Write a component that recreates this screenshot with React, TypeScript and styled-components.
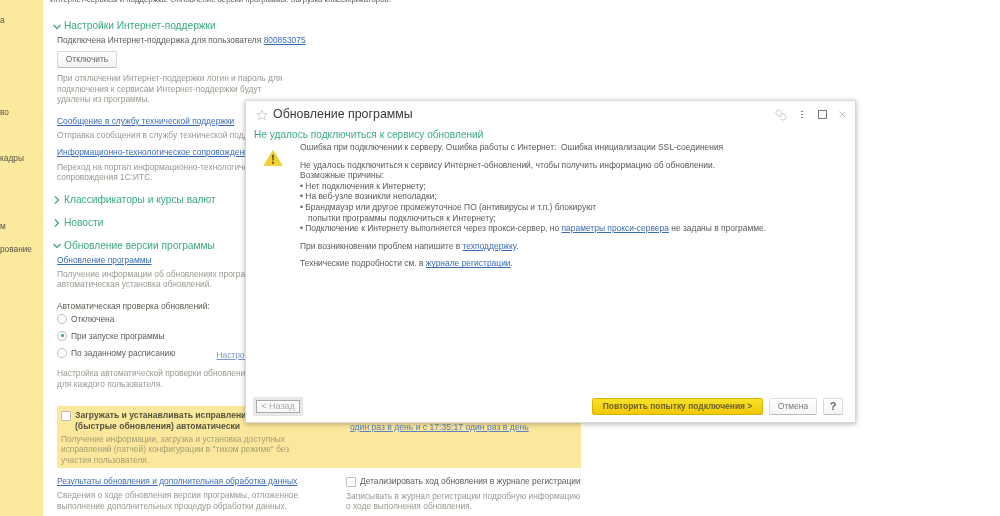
import React from "react";
import styled, { createGlobalStyle } from "styled-components";
import { Link as LinkIcon, X } from "lucide-react";

const Global = createGlobalStyle`
  html, body { margin: 0; padding: 0; background: #fff; overflow: hidden; }
  body { font-family: "Liberation Sans", Arial, sans-serif; }
`;

const Page = styled.div`
  position: relative;
  width: 1000px;
  height: 516px;
  display: flex;
  overflow: hidden;
  background: #fff;
  filter: blur(0.55px);
`;

const Sidebar = styled.nav`
  width: 43px;
  flex: none;
  background: #fbe99d;
  box-sizing: border-box;
  display: flex;
  flex-direction: column;
  font-size: 8.3px;
  color: #55534a;
  overflow: hidden;
  padding-top: 15px;
`;

const SideItem = styled.div<{ $mt: number }>`
  margin-top: ${(p) => p.$mt}px;
  line-height: 10px;
  white-space: nowrap;
`;

const Main = styled.main`
  flex: 1;
  padding-left: 14px;
  margin-top: -5px;
  font-size: 8.4px;
  line-height: 10.6px;
  color: #5c5b52;
  white-space: nowrap;
`;

const Content = styled.div`
  width: 524px;
`;

const TopLine = styled.div`
  margin-left: -7px;
  font-size: 7.85px;
`;

const Section = styled.h2<{ $mt: number }>`
  margin: ${(p) => p.$mt}px 0 0 -4px;
  display: flex;
  align-items: center;
  gap: 3px;
  height: 16px;
  padding-top: 2px;
  box-sizing: border-box;
  font-size: 10.2px;
  font-weight: 400;
  color: #3bab7b;
`;

const Line = styled.div<{ $mt?: number }>`
  margin-top: ${(p) => p.$mt ?? 0}px;
`;

const Help = styled.div<{ $mt?: number }>`
  margin-top: ${(p) => p.$mt ?? 0}px;
  color: #9a988e;
`;

const A = styled.a<{ $mt?: number }>`
  display: ${(p) => (p.$mt !== undefined ? "block" : "inline")};
  margin-top: ${(p) => p.$mt ?? 0}px;
  color: #3a6cb3;
  text-decoration: underline;
`;

const PlainButton = styled.div`
  margin-top: 6px;
  width: 60px;
  height: 17px;
  box-sizing: border-box;
  border: 1px solid #d8d8d8;
  border-bottom-color: #b8b8b8;
  border-radius: 2px;
  background: linear-gradient(#fff, #f3f3f3);
  display: flex;
  align-items: center;
  justify-content: center;
  color: #666;
`;

const RadioRow = styled.div<{ $mt: number }>`
  margin-top: ${(p) => p.$mt}px;
  display: flex;
  align-items: center;
  height: 11px;
  gap: 4px;
`;

const Radio = styled.span<{ $on?: boolean }>`
  width: 10px;
  height: 10px;
  box-sizing: border-box;
  border-radius: 50%;
  border: 1px solid #bdbdbd;
  background: #fff;
  display: flex;
  align-items: center;
  justify-content: center;
  &::after {
    content: "";
    width: 3px;
    height: 3px;
    border-radius: 50%;
    background: ${(p) => (p.$on ? "#2f9e6e" : "transparent")};
  }
`;

const ScheduleLink = styled.a`
  margin-left: 37px;
  margin-top: 5px;
  color: #7b9bcb;
  text-decoration: underline;
`;

const Highlight = styled.section`
  margin-top: 16px;
  height: 62px;
  background: #fbe89c;
  display: grid;
  grid-template-columns: 289px 1fr;
  padding: 4px 0 0 4px;
  box-sizing: border-box;
`;

const CheckRow = styled.div`
  display: flex;
  gap: 4px;
`;

const Check = styled.span`
  width: 10px;
  height: 10px;
  flex: none;
  box-sizing: border-box;
  border: 1px solid #bdbdbd;
  background: #fff;
  border-radius: 1px;
  margin-top: 1px;
`;

const StrongLabel = styled.div`
  font-size: 8.6px;
  font-weight: 700;
  line-height: 11px;
  color: #55533f;
`;

const PanelHelp = styled.div`
  margin-top: 2px;
  color: #a59e74;
`;

const ScheduleText = styled.a`
  margin-top: 12px;
  font-size: 8.6px;
  color: #5a82bd;
  text-decoration: underline;
`;

const Columns = styled.div`
  margin-top: 8px;
  display: grid;
  grid-template-columns: 289px 1fr;
`;

const LowerHelp = styled(Help)`
  margin-top: 4px;
`;

const Dialog = styled.section`
  position: absolute;
  left: 245px;
  top: 100px;
  width: 611px;
  height: 323px;
  box-sizing: border-box;
  background: #fff;
  border: 1px solid #d8d8d8;
  box-shadow: 0 1px 5px rgba(0, 0, 0, 0.3);
  display: flex;
  flex-direction: column;
  padding: 0 12px 7px 10px;
  white-space: nowrap;
  color: #5a5955;
  font-size: 8.45px;
  line-height: 10.6px;
`;

const TitleBar = styled.header`
  height: 27px;
  display: flex;
  align-items: center;
  gap: 5px;
  margin-right: -9px;
`;

const Title = styled.h1`
  margin: 0;
  flex: 1;
  font-size: 12.4px;
  font-weight: 400;
  color: #3a3a3a;
`;

const Tools = styled.div`
  display: flex;
  align-items: center;
  color: #8c8c8c;
`;

const Tool = styled.span`
  width: 20px;
  height: 14px;
  display: flex;
  align-items: center;
  justify-content: center;
`;

const LinkTool = styled(Tool)`
  margin-left: -3px;
  margin-right: 1px;
  transform: scaleX(-1);
`;

const Dots = styled.span`
  width: 2px;
  height: 9px;
  background: radial-gradient(circle, #777 1px, transparent 1px) 0 0 / 2px 3px;
`;

const Max = styled.span`
  width: 7px;
  height: 7px;
  border: 1px solid #777;
`;

const Heading = styled.h2`
  margin: 0 0 0 -2px;
  font-size: 10.15px;
  font-weight: 400;
  line-height: 13px;
  color: #3bab7b;
`;

const Body = styled.div`
  display: flex;
  flex: 1;
  margin-top: 1px;
`;

const WarnCol = styled.div`
  width: 44px;
  flex: none;
  padding: 8px 0 0 7px;
  box-sizing: border-box;
`;

const Para = styled.div<{ $mt?: number }>`
  margin-top: ${(p) => p.$mt ?? 0}px;
`;

const Indent = styled.span`
  padding-left: 8px;
`;

const Footer = styled.footer`
  display: flex;
  align-items: center;
  gap: 6px;
  height: 17px;
`;

const Btn = styled.div<{ $w: number }>`
  width: ${(p) => p.$w}px;
  height: 17px;
  box-sizing: border-box;
  border: 1px solid #dadada;
  border-bottom-color: #bbb;
  border-radius: 2px;
  background: linear-gradient(#fff, #f5f5f5);
  display: flex;
  align-items: center;
  justify-content: center;
  color: #777;
`;

const HelpBtn = styled(Btn)`
  font-size: 11px;
  font-weight: 700;
  color: #666;
`;

const BackBtn = styled(Btn)`
  margin-right: auto;
  margin-left: -3px;
  height: 19px;
  background: #e9e9e9;
  border: 1px solid #e4e4e4;
  padding: 2px;
  color: #aaa;
  & > span {
    flex: 1;
    height: 100%;
    box-sizing: border-box;
    border: 1px solid #a8a8a8;
    background: #fafafa;
    display: flex;
    align-items: center;
    justify-content: center;
    font-size: 9px;
  }
`;

const PrimaryBtn = styled(Btn)`
  background: linear-gradient(#fbe22c, #f0c800);
  border: 1px solid #d5b600;
  font-weight: 700;
  color: #6a6228;
`;

const Chevron = ({ open }: { open?: boolean }) => (
  <svg width="8" height="8" viewBox="0 0 8 8" fill="none" stroke="#3bab7b" strokeWidth="1.3">
    {open ? <path d="M.5 2l3.5 3.5L7.5 2" /> : <path d="M2 .5L5.5 4 2 7.5" />}
  </svg>
);

const Star = () => (
  <svg width="12" height="12" viewBox="0 0 13 13" fill="none" stroke="#cdcdcd" strokeWidth="1">
    <path d="M6.5 1l1.6 3.7 4 .4-3 2.6.9 3.9-3.5-2-3.5 2 .9-3.9-3-2.6 4-.4z" />
  </svg>
);

const Warning = () => (
  <svg width="20" height="16" viewBox="0 0 20 17">
    <path d="M10 0.5L19.6 16.5H.4z" fill="#f2d12e" stroke="#e0bb1a" strokeWidth="0.6" />
    <path d="M9 5h2l-.4 6.5H9.4zM9 12.6h2v2H9z" fill="#5d5326" />
  </svg>
);

export default function App() {
  return (
    <Page>
      <Global />
      <Sidebar>
        <SideItem $mt={0}>а</SideItem>
        <SideItem $mt={82}>во</SideItem>
        <SideItem $mt={36}>кадры</SideItem>
        <SideItem $mt={58}>м</SideItem>
        <SideItem $mt={13}>рование</SideItem>
      </Sidebar>
      <Main>
        <Content>
          <TopLine>Интернет-сервисы и поддержка. Обновление версии программы. Загрузка классификаторов.</TopLine>
          <Section $mt={12}><Chevron open />Настройки Интернет-поддержки</Section>
          <Line $mt={1}>Подключена Интернет-поддержка для пользователя <A>800853075</A></Line>
          <PlainButton>Отключить</PlainButton>
          <Help $mt={5}>
            При отключении Интернет-поддержки логин и пароль для<br />
            подключения к сервисам Интернет-поддержки будут<br />
            удалены из программы.
          </Help>
          <A $mt={11}>Сообщение в службу технической поддержки</A>
          <Help $mt={3}>Отправка сообщения в службу технической поддержки.</Help>
          <A $mt={7}>Информационно-технологическое сопровождение</A>
          <Help $mt={4}>
            Переход на портал информационно-технологического<br />
            сопровождения 1С:ИТС.
          </Help>
          <Section $mt={8}><Chevron />Классификаторы и курсы валют</Section>
          <Section $mt={7}><Chevron />Новости</Section>
          <Section $mt={7}><Chevron open />Обновление версии программы</Section>
          <A $mt={2}>Обновление программы</A>
          <Help $mt={3}>
            Получение информации об обновлениях программы и<br />
            автоматическая установка обновлений.
          </Help>
          <Line $mt={11}>Автоматическая проверка обновлений:</Line>
          <RadioRow $mt={2}><Radio />Отключена</RadioRow>
          <RadioRow $mt={6}><Radio $on />При запуске программы</RadioRow>
          <RadioRow $mt={6}>
            <Radio />По заданному расписанию
            <ScheduleLink>Настроить расписание</ScheduleLink>
          </RadioRow>
          <Help $mt={10}>
            Настройка автоматической проверки обновлений выполняется<br />
            для каждого пользователя.
          </Help>
          <Highlight>
            <div>
              <CheckRow>
                <Check />
                <StrongLabel>
                  Загружать и устанавливать исправления<br />
                  (быстрые обновления) автоматически
                </StrongLabel>
              </CheckRow>
              <PanelHelp>
                Получение информации, загрузка и установка доступных<br />
                исправлений (патчей) конфигурации в "тихом режиме" без<br />
                участия пользователя.
              </PanelHelp>
            </div>
            <ScheduleText>один раз в день и с 17:35:17 один раз в день</ScheduleText>
          </Highlight>
          <Columns>
            <div>
              <A>Результаты обновления и дополнительная обработка данных</A>
              <LowerHelp>
                Сведения о ходе обновления версии программы, отложенное<br />
                выполнение дополнительных процедур обработки данных.
              </LowerHelp>
            </div>
            <div>
              <CheckRow>
                <Check />
                <span>Детализировать ход обновления в журнале регистрации</span>
              </CheckRow>
              <LowerHelp>
                Записывать в журнал регистрации подробную информацию<br />
                о ходе выполнения обновления.
              </LowerHelp>
            </div>
          </Columns>
        </Content>
      </Main>
      <Dialog>
        <TitleBar>
          <Star />
          <Title>Обновление программы</Title>
          <Tools>
            <LinkTool><LinkIcon size={12} strokeWidth={1} /></LinkTool>
            <Tool><Dots /></Tool>
            <Tool><Max /></Tool>
            <Tool><X size={11} strokeWidth={1.2} /></Tool>
          </Tools>
        </TitleBar>
        <Heading>Не удалось подключиться к сервису обновлений</Heading>
        <Body>
          <WarnCol><Warning /></WarnCol>
          <div>
            <Para>Ошибка при подключении к серверу. Ошибка работы с Интернет:&nbsp; Ошибка инициализации SSL-соединения</Para>
            <Para $mt={7}>Не удалось подключиться к сервису Интернет-обновлений, чтобы получить информацию об обновлении.</Para>
            <Para>Возможные причины:</Para>
            <Para>• Нет подключения к Интернету;</Para>
            <Para>• На веб-узле возникли неполадки;</Para>
            <Para>• Брандмауэр или другое промежуточное ПО (антивирусы и т.п.) блокируют</Para>
            <Para><Indent>попытки программы подключиться к Интернету;</Indent></Para>
            <Para>• Подключение к Интернету выполняется через прокси-сервер, но <A>параметры прокси-сервера</A> не заданы в программе.</Para>
            <Para $mt={7}>При возникновении проблем напишите в <A>техподдержку</A>.</Para>
            <Para $mt={7}>Технические подробности см. в <A>журнале регистрации</A>.</Para>
          </div>
        </Body>
        <Footer>
          <BackBtn $w={50}><span>&lt; Назад</span></BackBtn>
          <PrimaryBtn $w={171}>Повторить попытку подключения &gt;</PrimaryBtn>
          <Btn $w={48}>Отмена</Btn>
          <HelpBtn $w={20}>?</HelpBtn>
        </Footer>
      </Dialog>
    </Page>
  );
}
